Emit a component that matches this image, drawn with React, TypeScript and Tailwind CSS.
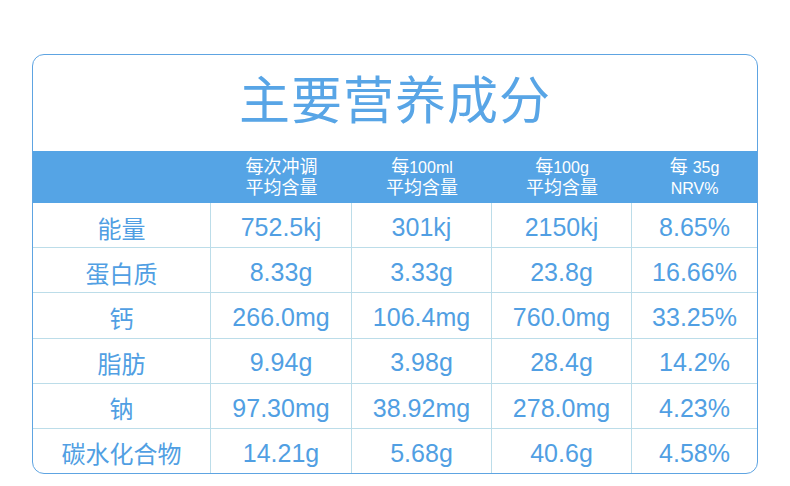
const zh = '"Noto Sans CJK SC", sans-serif';

const headers: [string, string, string, string][] = [
  ["", "", "", ""],
  ["每次冲调", "", "平均含量", ""],
  ["每", "100ml", "平均含量", ""],
  ["每", "100g", "平均含量", ""],
  ["每 ", "35g", "", "NRV%"],
];

const rows = [
  ["能量", "752.5kj", "301kj", "2150kj", "8.65%"],
  ["蛋白质", "8.33g", "3.33g", "23.8g", "16.66%"],
  ["钙", "266.0mg", "106.4mg", "760.0mg", "33.25%"],
  ["脂肪", "9.94g", "3.98g", "28.4g", "14.2%"],
  ["钠", "97.30mg", "38.92mg", "278.0mg", "4.23%"],
  ["碳水化合物", "14.21g", "5.68g", "40.6g", "4.58%"],
];

const cols = "grid grid-cols-[178px_141px_140px_140px_1fr]";

export default function App() {
  return (
    <div
      className="w-[790px] h-[486px] bg-white pt-[54px] pl-[32px]"
      style={{ fontFamily: '"Liberation Sans", "Noto Sans CJK SC", sans-serif' }}
    >
      <div className="w-[726px] h-[420px] border border-[#5ea4e2] rounded-[12px] overflow-hidden flex flex-col">
        {/* Title */}
        <div className="h-[96px] flex items-center justify-center pb-[12px]">
          <h1 className="text-[51px] leading-none text-[#58a5e6] tracking-[1px]" style={{ fontFamily: zh }}>
            主要营养成分
          </h1>
        </div>

        {/* Header bar */}
        <div className={`${cols} h-[52px] bg-[#55a4e5] text-white`}>
          {headers.map((h, i) => (
            <div key={i} className="flex flex-col items-center justify-center pt-[1px]">
              <div className="h-[21px] leading-[21px]">
                <span className="text-[18px]">{h[0]}</span>
                <span className="text-[16px]">{h[1]}</span>
              </div>
              <div className="h-[21px] leading-[21px]">
                <span className="text-[18px]">{h[2]}</span>
                <span className="text-[16px]">{h[3]}</span>
              </div>
            </div>
          ))}
        </div>

        {/* Rows */}
        <div className="flex-1 flex flex-col">
          {rows.map((r, ri) => (
            <div
              key={ri}
              className={`${cols} flex-1 ${ri < rows.length - 1 ? "border-b border-[#bcdde9]" : ""}`}
            >
              {r.map((c, ci) => (
                <div
                  key={ci}
                  className={`flex items-center justify-center pt-[5px] text-[#519fe3] ${
                    ci === 0 ? "text-[24px]" : "text-[25px]"
                  } ${ci < r.length - 1 ? "border-r border-[#bcdde9]" : ""}`}
                  style={ci === 0 ? { fontFamily: zh } : undefined}
                >
                  {c}
                </div>
              ))}
            </div>
          ))}
        </div>
      </div>
    </div>
  );
}
